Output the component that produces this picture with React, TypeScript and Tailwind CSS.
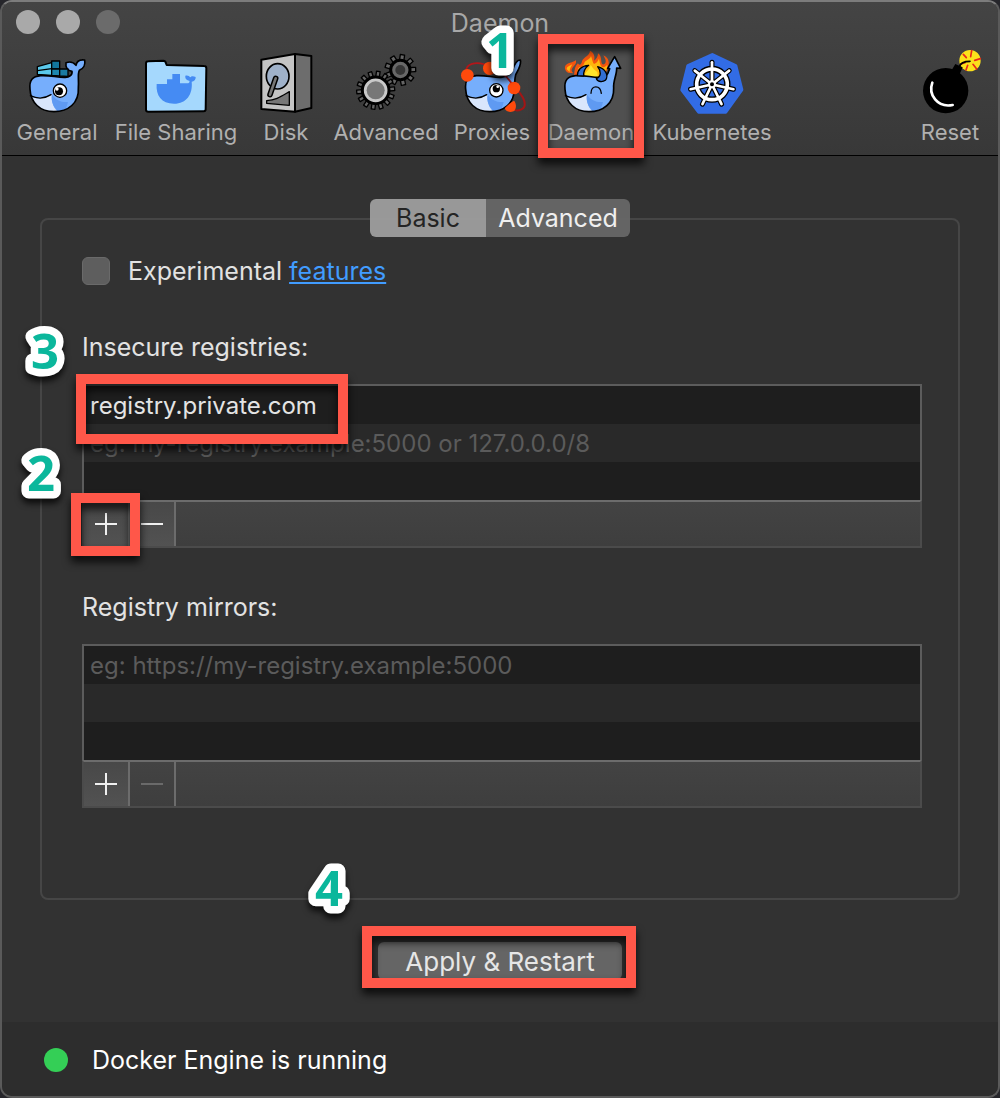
import React, { useState } from "react";

const FONT = "font-['Inter','Liberation_Sans',sans-serif]";

/* ---------- toolbar icons ---------- */

function Icon({ box, children }: { box: string; children: React.ReactNode }) {
  return (
    <svg viewBox={box} className="h-16 w-16 shrink-0 overflow-visible" aria-hidden="true">
      {children}
    </svg>
  );
}

/** Whale body; `tail` is the path segment between the back and the right flank. */
function Whale({ id, tail, children }: { id: string; tail: string; children?: React.ReactNode }) {
  const body = `M90 268C87 240 98 229 122 227C150 225 172 233 196 232${tail}C238 310 204 335 162 335C120 335 92 308 90 268Z`;
  return (
    <g strokeLinejoin="round" strokeLinecap="round">
      <clipPath id={id}>
        <path d={body} />
      </clipPath>
      <path d={body} fill="#76aefc" />
      <g clipPath={`url(#${id})`}>
        <path d="M86 288C110 298 138 296 156 284C152 306 162 326 178 340L80 340Z" fill="#d9e6fc" />
        <path d="M156 284C152 306 162 326 182 340C196 334 200 322 204 306C184 308 168 300 156 284Z" fill="#5f9af2" />
      </g>
      <path d={body} fill="none" stroke="#000" strokeWidth="5" />
      <path d="M91 287C112 297 136 295 153 284" fill="none" stroke="#000" strokeWidth="4" />
      {children}
    </g>
  );
}

function GeneralIcon() {
  return (
    <Icon box="75 150 192 192">
      <Whale
        id="whale-general"
        tail="C206 231 218 226 216 214C202 212 196 202 198 188C210 184 222 188 228 196C230 184 240 178 254 180C257 194 250 206 238 211C232 222 237 240 235 262"
      >
        <circle cx="180" cy="272" r="20" fill="#fff" stroke="#000" strokeWidth="4" />
        <circle cx="177" cy="274" r="12" />
        <circle cx="171" cy="267" r="5" fill="#fff" />
      </Whale>
      <g stroke="#000" strokeWidth="4" strokeLinejoin="round">
        <path d="M112 200L155 188V226L112 223Z" fill="#5ac8ea" />
        <path d="M155 183H179V207H155Z" fill="#12769c" />
        <path d="M155 207H179V228L155 226Z" fill="#1c86ae" />
        <path d="M179 207H204V229L179 228Z" fill="#1b7ba2" />
        <path d="M112 212L155 206" fill="none" />
      </g>
    </Icon>
  );
}

function FolderIcon() {
  return (
    <Icon box="432 150 192 192">
      <path
        d="M438 190Q438 184 445 184L490 182Q497 182 498 190L500 195L612 198Q619 198 619 205L617 328Q617 334 611 334L445 335Q438 335 438 329Z"
        fill="#a5d8fd"
        stroke="#000"
        strokeWidth="6"
        strokeLinejoin="round"
      />
      <path
        d="M470 252H501V238H517V222H540V250H560C568 250 570 246 568 242C558 240 555 234 556 227C563 225 568 228 571 232C574 227 581 228 587 231C588 239 582 244 575 245C579 282 560 311 522 311C484 311 467 286 470 252Z"
        fill="#458bf3"
      />
    </Icon>
  );
}

function DiskIcon() {
  return (
    <Icon box="42 150 192 192">
      <g stroke="#000" strokeWidth="6" strokeLinejoin="round">
        <path d="M165 162L214 168V324L165 335Z" fill="#6d6d6d" />
        <path d="M64 179L165 162V335L64 327Z" fill="#c4c4c4" />
        <ellipse cx="113" cy="229" rx="34" ry="38" fill="#9fb1c9" strokeWidth="5" />
        <path d="M80 302C108 300 122 290 148 275V316L80 310Z" fill="#777" strokeWidth="4" />
        <path d="M107 235L90 284" stroke="#000" strokeWidth="17" strokeLinecap="round" fill="none" />
        <path d="M107 235L90 284" stroke="#777" strokeWidth="8" strokeLinecap="round" fill="none" />
      </g>
    </Icon>
  );
}

function Gear(p: { cx: number; cy: number; r: number; teeth: number; ring: string; hub: string; hubR: number; tooth: number }) {
  return (
    <g transform={`translate(${p.cx} ${p.cy})`} stroke="#000" strokeLinejoin="round">
      {Array.from({ length: p.teeth }, (_, i) => (
        <rect
          key={i}
          x={-p.tooth / 2}
          y={-p.r - 14}
          width={p.tooth}
          height="18"
          fill="#666"
          strokeWidth="4"
          transform={`rotate(${(i * 360) / p.teeth + 8})`}
        />
      ))}
      <circle r={p.r - 3} fill={p.ring} strokeWidth="9" />
      <circle r={p.hubR} fill={p.hub} stroke="none" />
    </g>
  );
}

function GearsIcon() {
  return (
    <Icon box="342 150 192 192">
      <Gear cx={481} cy={210} r={32} teeth={9} ring="#686868" hub="#363636" hubR={15} tooth={13} />
      <Gear cx={407} cy={271} r={43} teeth={14} ring="#c9c9c9" hub="#777" hubR={27} tooth={11} />
    </Icon>
  );
}

function ProxiesIcon() {
  return (
    <Icon box="60 150 192 192">
      <path d="M205 250C244 272 270 318 244 328C232 334 218 330 208 322" fill="none" stroke="#a31515" strokeWidth="6" />
      <g transform="translate(-13 0)">
        <Whale
          id="whale-proxies"
          tail="C212 231 226 222 232 208C236 194 244 180 254 180C258 196 246 212 240 224C236 240 238 250 235 264"
        >
          <circle cx="182" cy="271" r="20" fill="#fff" stroke="#000" strokeWidth="4" />
          <circle cx="182" cy="266" r="11" />
          <circle cx="186" cy="260" r="4" fill="#fff" />
        </Whale>
      </g>
      <path d="M80 224C70 190 110 180 150 200C184 212 206 232 222 262" fill="none" stroke="#b3161a" strokeWidth="5" />
      <g fill="#ff4a0c">
        <circle cx="82" cy="226" r="19" />
        <circle cx="149" cy="205" r="20" />
        <circle cx="222" cy="264" r="19" />
        <path d="M194 325C202 315 214 306 222 302C230 310 230 328 221 334C208 338 198 335 194 325Z" />
      </g>
    </Icon>
  );
}

function DaemonIcon() {
  return (
    <Icon box="357 150 192 192">
      <g fill="#f4550e">
        <path d="M384 218C370 208 372 192 390 188C398 186 404 184 407 180C412 192 400 198 396 206C393 211 396 216 400 220Z" />
        <path d="M402 232C404 214 402 202 414 190C418 198 424 194 426 184C430 170 448 170 450 152C462 158 466 170 462 182C470 178 474 168 474 160C486 168 482 182 486 192C492 196 500 190 496 178L490 166C510 174 510 196 500 212L490 240Z" />
      </g>
      <path d="M380 208C380 198 390 198 397 192C394 200 388 206 389 216Z" fill="#ffb60d" />
      <path
        d="M410 230C412 216 412 208 417 202C424 204 432 196 434 186C440 180 450 178 453 168C457 178 458 188 462 192C468 190 474 184 477 176C480 188 480 198 488 202C494 202 498 198 502 194C502 208 494 216 488 240Z"
        fill="#ffb60d"
      />
      <path d="M432 230C434 216 450 210 452 194C458 206 466 210 472 216L474 234Z" fill="#ffe52c" />
      <g transform="translate(285 0)">
        <Whale
          id="whale-daemon"
          tail="C208 236 218 226 224 206L218 205L239 170L257 205L245 204C246 224 234 242 236 264"
        >
          <path d="M168 280C168 254 196 254 199 280" fill="none" stroke="#000" strokeWidth="4" />
        </Whale>
      </g>
      <g fill="#326fd2" stroke="#000" strokeWidth="4" strokeLinejoin="round">
        <path d="M412 227C412 210 424 197 446 196C435 204 430 214 431 228Z" />
        <path d="M469 236C484 230 484 214 473 200C496 206 508 226 496 241C488 247 472 246 469 236Z" />
      </g>
    </Icon>
  );
}

function KubernetesIcon() {
  const spokes = Array.from({ length: 7 }, (_, i) => (i * 360) / 7);
  return (
    <Icon box="120 60 192 192">
      <path
        d="M217 74L287 107L305 179L257 246H176L126 180L144 107Z"
        fill="#326ce5"
        stroke="#326ce5"
        strokeWidth="10"
        strokeLinejoin="round"
      />
      <g transform="translate(216 163)" fill="none" strokeLinecap="round">
        <circle r="46" stroke="#000" strokeWidth="19" />
        {spokes.map((a) => (
          <path key={a} d="M0 0V-66" stroke="#000" strokeWidth="15" transform={`rotate(${a})`} />
        ))}
        <circle r="46" stroke="#fff" strokeWidth="11" />
        {spokes.map((a) => (
          <path key={a} d="M0 -8V-66" stroke="#fff" strokeWidth="8" transform={`rotate(${a})`} />
        ))}
        <circle r="9" fill="#000" stroke="#fff" strokeWidth="6" />
      </g>
    </Icon>
  );
}

function BombIcon() {
  return (
    <Icon box="114 150 192 192">
      <circle cx="270" cy="182" r="32" fill="#fce11b" />
      <g stroke="#e8271c" strokeWidth="5" strokeLinecap="round">
        <path d="M272 170L275 152" />
        <path d="M284 181L301 176" />
        <path d="M279 193L290 207" />
        <path d="M263 196L258 210" />
        <path d="M259 173L250 163" />
        <path d="M255 188L242 192" />
      </g>
      <path d="M238 200C242 186 254 184 270 184" fill="none" stroke="#000" strokeWidth="5" strokeLinecap="round" />
      <circle cx="197" cy="272" r="68" />
      <path d="M226 192L248 202L238 224L214 212Z" />
      <path d="M157 248C144 284 172 324 218 315" fill="none" stroke="#fff" strokeWidth="8" strokeLinecap="round" />
    </Icon>
  );
}

/* ---------- callouts ---------- */

function Callout({ n, place }: { n: string; place: string }) {
  return (
    <svg
      viewBox="0 0 60 60"
      aria-label={`Step ${n}`}
      className={`pointer-events-none absolute z-20 h-[60px] w-[60px] overflow-visible font-['Open_Sans',sans-serif] drop-shadow-[0_5px_3px_rgba(0,0,0,0.75)] ${place}`}
    >
      <text
        x="30"
        y="48"
        textAnchor="middle"
        fontSize="49"
        fontWeight="700"
        fill="#0bb79c"
        stroke="#fff"
        strokeWidth="15"
        strokeLinejoin="round"
        paintOrder="stroke"
      >
        {n}
      </text>
    </svg>
  );
}

function Highlight({ place }: { place: string }) {
  return (
    <span
      aria-hidden="true"
      className={`pointer-events-none absolute z-10 border-10 border-[#ff5749] drop-shadow-[0_6px_4px_rgba(0,0,0,0.8)] ${place}`}
    />
  );
}

/* ---------- controls ---------- */

function ToolButton({ label, width, icon, children }: { label: string; width: string; icon: React.ReactNode; children?: React.ReactNode }) {
  return (
    <button type="button" className={`relative flex flex-col items-center ${width}`}>
      {icon}
      <span className="mt-1 text-[22px] leading-7 whitespace-nowrap text-[#b0b0b0]">{label}</span>
      {children}
    </button>
  );
}

function Glyph({ plus }: { plus?: boolean }) {
  return (
    <svg viewBox="0 0 24 24" className="h-6 w-6" stroke="currentColor" strokeWidth="2" aria-hidden="true">
      <path d="M1 12H23" />
      {plus && <path d="M12 1V23" />}
    </svg>
  );
}

function RegistryList(p: {
  id: string;
  title: string;
  values: string[];
  placeholders: string[];
  canRemove: boolean;
  listMark?: React.ReactNode;
  addMark?: React.ReactNode;
}) {
  const [values, setValues] = useState(p.values);
  return (
    <section>
      <h2 id={p.id} className="text-[25px] leading-8 text-[#e2e2e2]">{p.title}</h2>
      <div className="relative mt-[21px]">
        <div className="border-2 border-b-0 border-[#5c5c5c]">
          {values.map((v, i) => (
            <input
              key={i}
              type="text"
              aria-labelledby={p.id}
              value={v}
              placeholder={p.placeholders[i]}
              onChange={(e) => setValues(values.map((o, j) => (j === i ? e.target.value : o)))}
              className="block h-[38px] w-full bg-[#1e1e1e] px-1.5 text-[24px] text-[#e4e4e4] outline-none placeholder:text-[#5b5b5b] even:bg-[#292929]"
            />
          ))}
        </div>
        <div className="flex h-12 border-2 border-[#4b4b4b] border-t-[#6c6c6c] bg-linear-to-b from-[#434343] to-[#3e3e3e]">
          <div className="relative flex">
            <button
              type="button"
              aria-label={`Add to ${p.title}`}
              className="flex w-[46px] items-center justify-center border-r-2 border-[#6c6c6c] bg-linear-to-b from-[#484848] to-[#525252] text-[#efefef]"
            >
              <Glyph plus />
            </button>
            {p.addMark}
          </div>
          <button
            type="button"
            aria-label={`Remove from ${p.title}`}
            disabled={!p.canRemove}
            className="flex w-[46px] items-center justify-center border-r-2 border-[#6c6c6c] bg-linear-to-b from-[#484848] to-[#525252] text-[#efefef] disabled:from-[#434343] disabled:to-[#3e3e3e] disabled:text-[#6a6a6a]"
          >
            <Glyph />
          </button>
        </div>
        {p.listMark}
      </div>
    </section>
  );
}

export default function App() {
  return (
    <div className={`min-h-screen bg-[#26262b] ${FONT}`}>
      <div className="flex min-h-screen flex-col overflow-hidden rounded-xl border-2 border-[#5a5a5a] border-t-[#7c7c7c] bg-[#323232]">
        <header className="border-b border-black bg-linear-to-b from-[#444] to-[#383838] pb-[9px]">
          <div className="relative flex h-10 items-center justify-center">
            <div className="absolute left-3.5 flex gap-4">
              <button type="button" aria-label="Close" className="h-6 w-6 rounded-full bg-[#a9a9a9]" />
              <button type="button" aria-label="Minimize" className="h-6 w-6 rounded-full bg-[#a9a9a9]" />
              <button type="button" aria-label="Zoom" disabled className="h-6 w-6 rounded-full bg-[#6b6b6b]" />
            </div>
            <h1 className="pt-0.5 text-[25px] leading-8 text-[#a8a8a8]">Daemon</h1>
          </div>
          <nav className="flex items-start gap-4 px-3.5 pt-2">
            <ToolButton label="General" width="w-[82px]" icon={<GeneralIcon />} />
            <ToolButton label="File Sharing" width="w-[124px]" icon={<FolderIcon />} />
            <ToolButton label="Disk" width="w-16" icon={<DiskIcon />} />
            <ToolButton label="Advanced" width="w-[104px]" icon={<GearsIcon />} />
            <ToolButton label="Proxies" width="w-[76px]" icon={<ProxiesIcon />}>
              <Callout n="1" place="-top-[30px] left-4" />
            </ToolButton>
            <ToolButton label="Daemon" width="w-[90px] before:absolute before:inset-x-0 before:-top-2 before:-bottom-2 before:-z-10 before:bg-[#505050] z-0" icon={<DaemonIcon />}>
              <Highlight place="-inset-x-2 -top-4 -bottom-3" />
            </ToolButton>
            <ToolButton label="Kubernetes" width="w-[120px]" icon={<KubernetesIcon />} />
            <div className="ml-auto">
              <ToolButton label="Reset" width="w-[68px]" icon={<BombIcon />} />
            </div>
          </nav>
        </header>

        <main className="flex flex-1 flex-col items-center px-[38px] pt-[43px]">
          <div className="z-10 flex h-[38px] overflow-hidden rounded-md text-[25px] leading-9" role="tablist">
            <button type="button" role="tab" aria-selected="true" className="w-[116px] bg-[#9e9e9e]/95 text-[#242424]">Basic</button>
            <button type="button" role="tab" aria-selected="false" className="w-36 bg-[#676767]/95 text-[#efefef]">Advanced</button>
          </div>

          <div className="relative -mt-[19px] w-full rounded-lg border-2 border-[#464646] pt-[35px] pr-9 pb-[90px] pl-10">
            <div className="flex items-center gap-[18px] text-[25px] leading-8 text-[#e2e2e2]">
              <input id="experimental" type="checkbox" className="h-7 w-7 appearance-none rounded-md border border-[#6a6a6a] bg-[#5e5e5e]" />
              <label htmlFor="experimental">
                Experimental <a href="#features" className="text-[#419cff] underline decoration-2 underline-offset-2">features</a>
              </label>
            </div>
            <div className="relative mt-11">
              <RegistryList
                id="insecure"
                title="Insecure registries:"
                values={["registry.private.com", "", ""]}
                placeholders={["", "eg: my-registry.example:5000 or 127.0.0.0/8", ""]}
                canRemove
                listMark={<Highlight place="-top-2.5 -left-1.5 h-[70px] w-[272px]" />}
                addMark={<Highlight place="-top-[9px] -left-[13px] h-[63px] w-[69px]" />}
              />
              <Callout n="3" place="-top-2.5 -left-[67px]" />
              <Callout n="2" place="top-[112px] -left-[71px]" />
            </div>
            <div className="mt-[43px]">
              <RegistryList
                id="mirrors"
                title="Registry mirrors:"
                values={["", "", ""]}
                placeholders={["eg: https://my-registry.example:5000", "", ""]}
                canRemove={false}
              />
            </div>
            <Callout n="4" place="-bottom-5 left-[257px]" />
          </div>

          <div className="relative mt-[42px] mb-10">
            <button type="button" className="h-[38px] w-[244px] rounded-md bg-[#656565] text-[26px] leading-10 text-[#e6e6e6]">Apply &amp; Restart</button>
            <Highlight place="-top-4 -right-3.5 -left-4 h-[62px]" />
          </div>
        </main>

        <footer className="flex h-[74px] items-center gap-6 bg-[#2d2d2d] px-[42px] pt-0.5 text-[25px] leading-8 text-white">
          <span className="h-6 w-6 rounded-full bg-[#34cf56]" />
          <p>Docker Engine is running</p>
        </footer>
      </div>
    </div>
  );
}
